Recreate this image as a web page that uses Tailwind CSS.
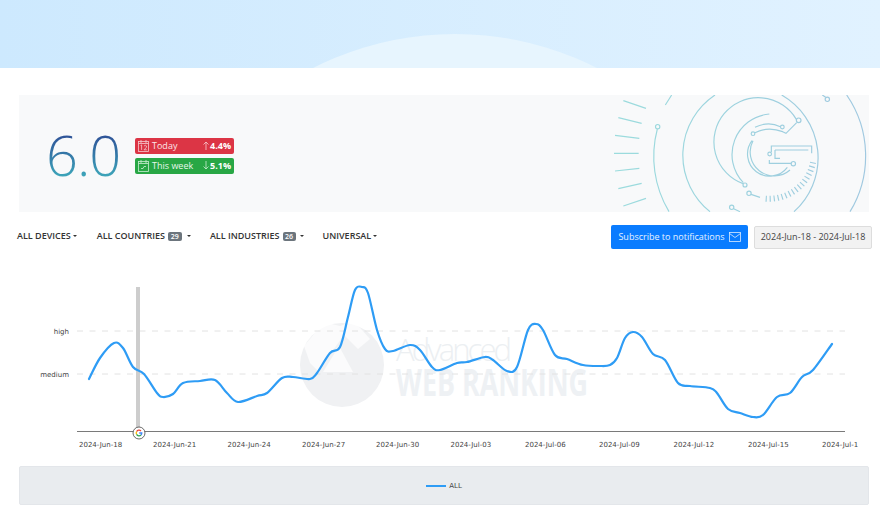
<!DOCTYPE html>
<html lang="en">
<head>
    <meta charset="UTF-8">
    <title>Google Algorithm Changes</title>
    <script src="https://cdn.jsdelivr.net/npm/@tailwindcss/browser@4"></script>
</head>
<body class="bg-white">
    <div class="w-[880px] h-[512px] overflow-hidden font-['Open_Sans',sans-serif] text-[#212529]">

        <!-- header -->
        <div class="h-[68px] bg-gradient-to-r from-[#cde9fe] to-[#e1f2ff]">
            <svg width="880" height="68" class="block">
                <circle cx="455" cy="347" r="313" fill="#e7f5fe"></circle>
            </svg>
        </div>

        <!-- score banner -->
        <div class="mt-[27px] ml-[19px] mr-[11px] h-[117px] bg-[#f8f9fa] flex items-center justify-between">
            <div class="flex items-center pl-[27px]">
                <div class="w-[89px] text-[56px] leading-none font-light tracking-[-1px] text-transparent bg-clip-text bg-gradient-to-b from-[#2c3f8f] to-[#3fb0bd]">6.0</div>
                <div class="flex flex-col gap-[4px] mt-[4px] text-white text-[9px]">
                    <div class="w-[99px] h-[16px] bg-[#dc3545] rounded-[2px] flex items-center pl-[3px] pr-[3px]">
                        <svg width="11" height="12" viewBox="0 0 11 12" fill="none" stroke="#f6c9ce" stroke-width="0.8" class="mr-[3px]">
                            <rect x="0.5" y="1.5" width="10" height="10"></rect>
                            <path d="M3 0v3M8 0v3M0.5 3.5h10"></path>
                            <path d="M2.600 5.500l1-.6v5M6 6q2-1.400 2.500 0t-2.500 3.800h2.800"></path>
                        </svg>
                        <span class="text-[#fbe6e8]">Today</span>
                        <span class="ml-auto flex items-center font-bold">
                            <svg width="6" height="9" viewBox="0 0 6 9" fill="none" stroke="#f6c9ce" stroke-width="0.8" class="mr-[1px]"><path d="M3 9V1M.5 3.500L3 1l2.500 2.500"></path></svg>4.4%</span>
                    </div>
                    <div class="w-[99px] h-[16px] bg-[#28a745] rounded-[2px] flex items-center pl-[3px] pr-[3px]">
                        <svg width="11" height="12" viewBox="0 0 11 12" fill="none" stroke="#c9ecd2" stroke-width="0.8" class="mr-[3px]">
                            <rect x="0.5" y="1.5" width="10" height="10"></rect>
                            <path d="M3 0v3M8 0v3M0.5 3.500h10M3 8.500h2l1-2h2"></path>
                        </svg>
                        <span class="text-[#e6f6ea]">This week</span>
                        <span class="ml-auto flex items-center font-bold">
                            <svg width="6" height="9" viewBox="0 0 6 9" fill="none" stroke="#c9ecd2" stroke-width="0.8" class="mr-[1px]"><path d="M3 0v8M.5 5.500L3 8l2.500-2.500"></path></svg>5.1%</span>
                    </div>
                </div>
            </div>

            <svg width="279" height="117" viewBox="0 15 837 351" fill="none" stroke="url(#circuit)" stroke-width="3.500">
                <defs>
                    <linearGradient id="circuit" gradientUnits="userSpaceOnUse" x1="70" y1="0" x2="837" y2="0">
                        <stop offset="0" stop-color="#9bdcdd"></stop>
                        <stop offset="1" stop-color="#a0c8e0"></stop>
                    </linearGradient>
                </defs>
                <path d="M100 32L168 55M85 83L155 100M75 136L148 145M72 190H146M75 243L148 235M85 296L155 280M100 348L168 325M226 45L245 15"></path>
                <circle cx="203" cy="110" r="6.500"></circle>
                <path d="M202 117A322 322 0 0 0 237 365"></path>
                <path d="M375 15A217 217 0 0 0 360 365M575 15A217 217 0 0 1 612 365"></path>
                <path d="M770 15A322 322 0 0 1 780 365M697 15L707 22"></path>
                <circle cx="712" cy="28" r="6.500"></circle>
                <!-- G mark -->
                <path d="M619 88A133 133 0 1 0 459 281"></path>
                <circle cx="626" cy="91" r="7"></circle>
                <circle cx="465" cy="285" r="6"></circle>
                <path d="M538 72A122 122 0 0 0 460 278"></path>
                <path d="M571 110Q535 92 495 112M495 128Q535 108 578 125L588 130L620 98"></path>
                <circle cx="577" cy="111" r="5.500"></circle>
                <circle cx="489" cy="131" r="5.500"></circle>
                <path d="M489 152A72 72 0 0 0 600 240M486 152A62 62 0 0 0 592 232"></path>
                <path d="M544 186V168H665V190M555 180H655M555 180V205H570M538 210V220H604"></path>
                <circle cx="539" cy="192" r="5.500"></circle>
                <circle cx="610" cy="221" r="6.500"></circle>
                <path d="M527 326A135 135 0 0 0 670 212" stroke-width="18" stroke-dasharray="3.500 8.500"></path>
                <circle cx="477" cy="310" r="6.500"></circle>
                <path d="M483 313L510 322"></path>
                <circle cx="425" cy="352" r="6.500"></circle>
                <path d="M431 356L450 365"></path>
            </svg>
        </div>

        <!-- filters -->
        <div class="mt-[13px] h-[24px] pl-[17px] pr-[8px] flex items-center justify-between">
            <div class="flex items-center gap-[19px] text-[9px] font-semibold text-[#333] -mt-[2px]">
                <div class="flex items-center gap-[2px] mr-[1px]">ALL DEVICES <span class="border-t-[2px] border-x-[2px] border-x-transparent border-t-[#333]"></span></div>
                <div class="flex items-center">ALL COUNTRIES
                    <span class="ml-[3px] mr-[5px] w-[14px] h-[9px] rounded-[2px] bg-[#6c757d] text-white text-[7px] leading-[9px] text-center">29</span>
                    <span class="border-t-[2px] border-x-[2px] border-x-transparent border-t-[#333]"></span></div>
                <div class="flex items-center">ALL INDUSTRIES
                    <span class="ml-[3px] mr-[4px] w-[13px] h-[9px] rounded-[2px] bg-[#6c757d] text-white text-[7px] leading-[9px] text-center">26</span>
                    <span class="border-t-[2px] border-x-[2px] border-x-transparent border-t-[#333]"></span></div>
                <div class="flex items-center gap-[2px]">UNIVERSAL <span class="border-t-[2px] border-x-[2px] border-x-transparent border-t-[#333]"></span></div>
            </div>
            <div class="flex items-center gap-[6px] text-[9px]">
                <button class="w-[137px] h-[24px] bg-[#0a7cff] text-[#e6f2ff] rounded-[2px] flex items-center justify-center gap-[4px]">
                    Subscribe to notifications
                    <svg width="12" height="10" viewBox="0 0 12 10" fill="none" stroke="#dcebff" stroke-width="0.8"><rect x="0.5" y="0.5" width="11" height="9"></rect><path d="M.5 1.500L6 5.500l5.500-4"></path></svg>
                </button>
                <button class="w-[118px] h-[23px] bg-[#f2f2f2] border border-[#ddd] rounded-[2px] text-[#444]">2024-Jun-18 - 2024-Jul-18</button>
            </div>
        </div>

        <!-- chart -->
        <svg width="880" height="213" viewBox="0 249 880 213" class="block">
            <!-- watermark -->
            <circle cx="342" cy="365" r="42" fill="#f0f1f3"></circle>
            <path d="M304 346l20-24 16 4 14-5 16 18-12 10-14-14-26 36-8-8zM339 346l-16 26h30z" fill="#fff" opacity="0.7"></path>
            <text x="396" y="361" textLength="116" class="font-['Open_Sans'] font-light text-[31px] fill-[#eceff2]">Advanced</text>
            <text x="396" y="396" textLength="192" lengthAdjust="spacingAndGlyphs" class="font-['Open_Sans'] font-bold text-[37px] fill-[#eef1f4]">WEB RANKING</text>

            <line x1="77" y1="331" x2="845" y2="331" stroke="#e2e2e2" stroke-dasharray="6 6.500"></line>
            <line x1="77" y1="374" x2="845" y2="374" stroke="#e2e2e2" stroke-dasharray="6 6.500"></line>
            <text x="69" y="333.500" text-anchor="end" class="font-['DejaVu_Sans'] text-[7px] fill-[#444]">high</text>
            <text x="69" y="376.500" text-anchor="end" class="font-['DejaVu_Sans'] text-[7px] fill-[#444]">medium</text>

            <rect x="136" y="287" width="4" height="145" fill="#cdcdcd"></rect>
            <path id="line" fill="none" stroke="#2e9cf5" stroke-width="2.200" stroke-linecap="round"></path>
            <line x1="77" y1="431.500" x2="845" y2="431.500" stroke="#7a7a7a" stroke-width="1"></line>

            <!-- google marker -->
            <circle cx="139" cy="433" r="6" fill="#fff" stroke="#444" stroke-width="0.800"></circle>
            <g fill="none" stroke-width="1.300">
                <path d="M136.600 431.600A2.800 2.800 0 0 1 141 431" stroke="#ea4335"></path>
                <path d="M136.600 434.400A2.800 2.800 0 0 1 136.600 431.600" stroke="#fbbc05"></path>
                <path d="M141 435A2.800 2.800 0 0 1 136.600 434.400" stroke="#34a853"></path>
                <path d="M139.200 433H141.800A2.800 2.800 0 0 1 141 435" stroke="#4285f4"></path>
            </g>

            <g class="font-['DejaVu_Sans'] text-[7px] fill-[#444]">
                <text x="79" y="446.500">2024-Jun-18</text>
                <text x="153" y="446.500">2024-Jun-21</text>
                <text x="227.500" y="446.500">2024-Jun-24</text>
                <text x="302" y="446.500">2024-Jun-27</text>
                <text x="376" y="446.500">2024-Jun-30</text>
                <text x="450.500" y="446.500">2024-Jul-03</text>
                <text x="525" y="446.500">2024-Jul-06</text>
                <text x="599" y="446.500">2024-Jul-09</text>
                <text x="673.500" y="446.500">2024-Jul-12</text>
                <text x="748" y="446.500">2024-Jul-15</text>
                <text x="822" y="446.500">2024-Jul-1</text>
            </g>
        </svg>

        <!-- legend -->
        <div class="mt-[4px] ml-[19px] mr-[11px] h-[39px] bg-[#e9ecef] rounded-[2px] border border-[#e3e6ea] flex items-center justify-center gap-[3px]">
            <span class="w-[20px] h-[2px] bg-[#2e9cf5]"></span>
            <span class="text-[7px] text-[#444] font-['DejaVu_Sans'] leading-none mt-[2px]">ALL</span>
        </div>
    </div>

    <script>
        // rank volatility, traced as x,y chart points
        const points = [[89,379],[100,358],[114,343],[123,348],[133,367],[144,374],[157,393],[163,397],[173,394],[183,383],[200,381],[215,380],[227,393],[238,402],[257,396],[267,393],[282,378],[293,377],[310,379],[317,373],[330,353],[340,347],[348,317],[355,290],[362,287],[368,293],[377,330],[385,349],[393,351],[410,345],[420,350],[432,367],[440,370],[457,363],[467,362],[485,357],[493,360],[507,371],[517,367],[528,330],[536,324],[543,330],[555,355],[567,359],[583,365],[600,366],[610,365],[617,358],[625,338],[633,332],[642,337],[653,354],[665,360],[678,383],[690,386],[710,388],[717,393],[728,409],[740,413],[753,417],[763,415],[777,397],[790,393],[802,377],[813,370],[832,344]];
        let d = `M${points[0]}`;
        for (let i = 0; i < points.length - 1; i++) {
            const p0 = points[i - 1] || points[i], p1 = points[i], p2 = points[i + 1], p3 = points[i + 2] || p2;
            const c1 = [p1[0] + (p2[0] - p0[0]) / 6, p1[1] + (p2[1] - p0[1]) / 6];
            const c2 = [p2[0] - (p3[0] - p1[0]) / 6, p2[1] - (p3[1] - p1[1]) / 6];
            d += `C${c1} ${c2} ${p2}`;
        }
        document.getElementById('line').setAttribute('d', d);
    </script>
</body>
</html>
